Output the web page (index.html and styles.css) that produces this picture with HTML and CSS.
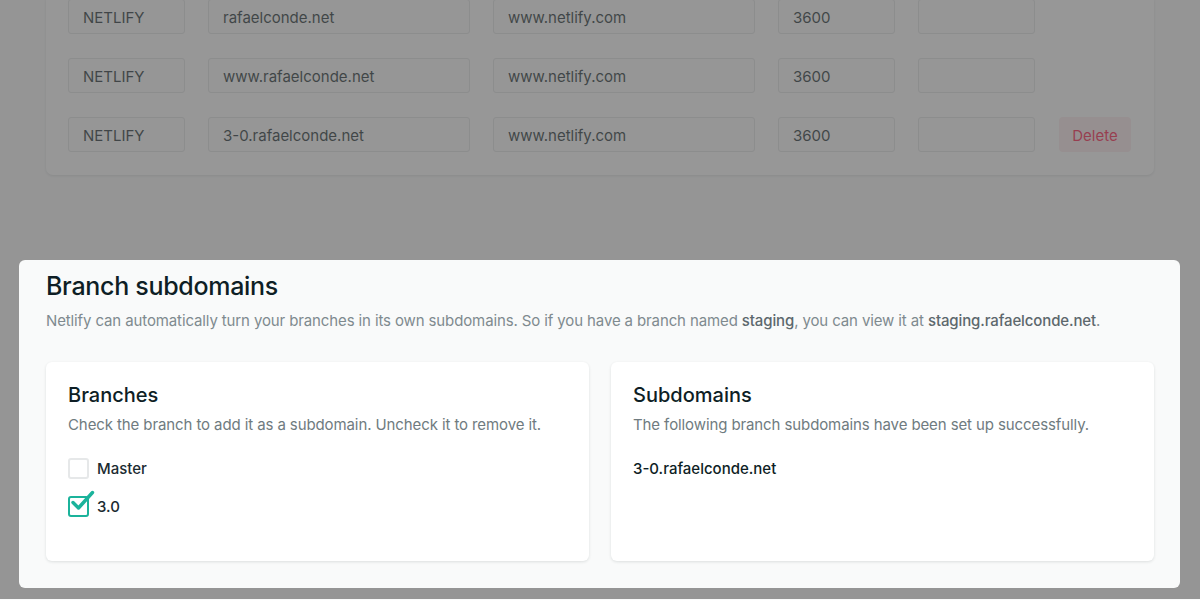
FILE: index.html
```html
<!DOCTYPE html>
<html>
<head>
<meta charset="utf-8">
<link rel="stylesheet" href="styles.css">
</head>
<body>
<div class="page">
  <section class="records">
    <div class="row">
      <div class="field f-type">NETLIFY</div>
      <div class="field f-name">rafaelconde.net</div>
      <div class="field f-value">www.netlify.com</div>
      <div class="field f-ttl">3600</div>
      <div class="field f-prio"></div>
    </div>
    <div class="row">
      <div class="field f-type">NETLIFY</div>
      <div class="field f-name">www.rafaelconde.net</div>
      <div class="field f-value">www.netlify.com</div>
      <div class="field f-ttl">3600</div>
      <div class="field f-prio"></div>
    </div>
    <div class="row">
      <div class="field f-type">NETLIFY</div>
      <div class="field f-name">3-0.rafaelconde.net</div>
      <div class="field f-value">www.netlify.com</div>
      <div class="field f-ttl">3600</div>
      <div class="field f-prio"></div>
      <button class="delete">Delete</button>
    </div>
  </section>

  <div class="backdrop"></div>

  <section class="focus">
    <h1 class="title">Branch subdomains</h1>
    <p class="lead">Netlify can automatically turn your branches in its own subdomains. So if you have a branch named <strong>staging</strong>, you can view it at <strong>staging.rafaelconde.net</strong>.</p>
    <div class="cards">
      <div class="card">
        <h2 class="card-title">Branches</h2>
        <p class="card-text">Check the branch to add it as a subdomain. Uncheck it to remove it.</p>
        <ul class="checks">
          <li class="check">
            <span class="box"></span>
            <span class="label">Master</span>
          </li>
          <li class="check">
            <span class="box checked">
              <svg class="tick" width="26" height="26" viewBox="0 0 26 26"><path d="M4 12.5 L9.5 18 L23.5 2.5" fill="none" stroke="#1bb39b" stroke-width="3.4" stroke-linecap="round" stroke-linejoin="round"/></svg>
            </span>
            <span class="label">3.0</span>
          </li>
        </ul>
      </div>
      <div class="card">
        <h2 class="card-title">Subdomains</h2>
        <p class="card-text">The following branch subdomains have been set up successfully.</p>
        <div class="domain">3-0.rafaelconde.net</div>
      </div>
    </div>
  </section>
</div>
</body>
</html>
```

FILE: styles.css
```css
* { box-sizing: border-box; }
html, body {
  margin: 0;
  padding: 0;
  background: #f9fafa;
  font-family: Inter, "Noto Sans", "Liberation Sans", sans-serif;
  color: #0e1e25;
  overflow: hidden;
}
.page {
  width: 1200px;
  height: 600px;
  position: relative;
}
.records {
  margin: -1px 46px 0 46px;
  background: #ffffff;
  border-radius: 0 0 7px 7px;
  box-shadow: 0 1px 3px rgba(14, 30, 37, 0.14);
  padding: 0 22px 23px 22px;
  display: flex;
  flex-direction: column;
  gap: 24px;
}
.row {
  display: flex;
  align-items: center;
  height: 35px;
}
.field {
  height: 35px;
  border: 1px solid #dfe2e3;
  border-radius: 3px;
  background: #fbfbfb;
  padding: 1px 14px 0 14px;
  display: flex;
  align-items: center;
  font-size: 15px;
  color: #0e1e25;
  margin-right: 23px;
}
.f-type { width: 117px; }
.f-name { width: 262px; }
.f-value { width: 262px; }
.f-ttl { width: 117px; }
.f-prio { width: 117px; margin-right: 24px; }
.delete {
  width: 72px;
  height: 35px;
  border: none;
  border-radius: 4px;
  background: #fde8eb;
  color: #ff0a3c;
  font-family: inherit;
  font-size: 15px;
  padding: 1px 0 0 0;
}
.backdrop {
  position: absolute;
  inset: 0;
  background: rgba(92, 92, 92, 0.64);
}
.focus {
  position: relative;
  z-index: 2;
  margin: 85px 20px 0 19px;
  background: #f9fafa;
  border-radius: 6px;
  padding: 8px 26px 27px 27px;
}
.title {
  margin: 0;
  font-size: 25px;
  font-weight: 500;
  line-height: 37px;
  letter-spacing: -0.3px;
  color: #0e1e25;
}
.lead {
  margin: 4px 0 0 0;
  font-size: 15px;
  line-height: 24px;
  color: #7f8a8f;
  letter-spacing: -0.12px;
}
.lead strong {
  font-weight: 500;
  color: #5d686d;
}
.cards {
  margin-top: 29px;
  display: grid;
  grid-template-columns: 1fr 1fr;
  gap: 22px;
}
.card {
  background: #ffffff;
  border-radius: 6px;
  box-shadow: 0 1px 3px rgba(14, 30, 37, 0.12);
  height: 199px;
  padding: 21px 22px;
}
.card-title {
  margin: 0;
  font-size: 20px;
  font-weight: 500;
  line-height: 24px;
  color: #0e1e25;
}
.card-text {
  margin: 8px 0 0 0;
  font-size: 15px;
  line-height: 20px;
  color: #6f7b80;
  letter-spacing: -0.1px;
}
.checks {
  list-style: none;
  margin: 23px 0 0 0;
  padding: 0;
  display: flex;
  flex-direction: column;
  gap: 17px;
}
.check {
  display: flex;
  align-items: center;
  height: 21px;
}
.box {
  position: relative;
  width: 21px;
  height: 21px;
  border: 2px solid #e6e8e9;
  border-radius: 3px;
  background: #fff;
  margin-right: 8px;
}
.box.checked {
  border-color: #1bb39b;
}
.tick {
  position: absolute;
  left: -1px;
  top: -8px;
}
.label {
  font-size: 15px;
  font-weight: 500;
  color: #1b2b31;
}
.domain {
  margin-top: 24px;
  font-size: 15px;
  font-weight: 500;
  color: #0e1e25;
}
```
